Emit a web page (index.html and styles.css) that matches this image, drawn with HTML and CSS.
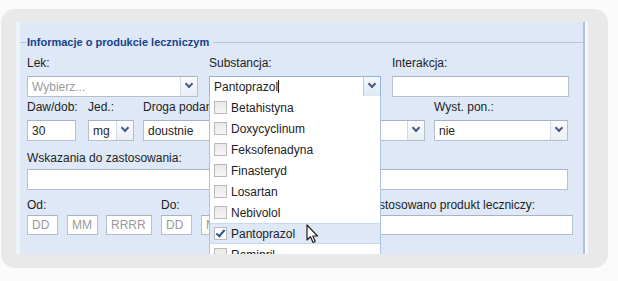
FILE: index.html
```html
<!DOCTYPE html>
<html lang="pl">
<head>
    <meta charset="UTF-8">
    <title>Informacje o produkcie leczniczym</title>
    <link rel="stylesheet" href="styles.css">
</head>
<body>
    <div class="card">
        <div class="screen">
            <div class="legend">
                <span class="legend-line short"></span>
                <span class="legend-text">Informacje o produkcie leczniczym</span>
                <span class="legend-line"></span>
            </div>

            <div class="form">
                <!-- Lek / Substancja / Interakcja -->
                <div class="row row-1">
                    <div class="field f-lek">
                        <label>Lek:</label>
                        <div class="combo">
                            <span class="value placeholder">Wybierz...</span>
                            <span class="trigger"></span>
                        </div>
                    </div>
                    <div class="field f-subst">
                        <label>Substancja:</label>
                        <div class="combo focused">
                            <span class="value">Pantoprazol<span class="caret"></span></span>
                            <span class="trigger"></span>
                        </div>
                    </div>
                    <div class="field f-inter">
                        <label>Interakcja:</label>
                        <div class="input"></div>
                    </div>
                </div>

                <!-- Dawkowanie -->
                <div class="row row-2">
                    <div class="field f-daw">
                        <label>Daw/dob:</label>
                        <div class="input"><span class="value">30</span></div>
                    </div>
                    <div class="field f-jed">
                        <label>Jed.:</label>
                        <div class="combo">
                            <span class="value">mg</span>
                            <span class="trigger"></span>
                        </div>
                    </div>
                    <div class="field f-droga">
                        <label>Droga podania:</label>
                        <div class="combo">
                            <span class="value">doustnie</span>
                            <span class="trigger"></span>
                        </div>
                    </div>
                    <div class="field f-wyst">
                        <label>Wyst. pon.:</label>
                        <div class="combo">
                            <span class="value">nie</span>
                            <span class="trigger"></span>
                        </div>
                    </div>
                </div>

                <div class="row row-3">
                    <div class="field f-full">
                        <label>Wskazania do zastosowania:</label>
                        <div class="input"></div>
                    </div>
                </div>

                <!-- Okres stosowania -->
                <div class="row row-4">
                    <div class="field">
                        <label>Od:</label>
                        <div class="date">
                            <div class="input d2"><span class="value placeholder">DD</span></div>
                            <div class="input d2"><span class="value placeholder">MM</span></div>
                            <div class="input d4"><span class="value placeholder">RRRR</span></div>
                        </div>
                    </div>
                    <div class="field">
                        <label>Do:</label>
                        <div class="date">
                            <div class="input d2"><span class="value placeholder">DD</span></div>
                            <div class="input d2"><span class="value placeholder">MM</span></div>
                            <div class="input d4"><span class="value placeholder">RRRR</span></div>
                        </div>
                    </div>
                    <div class="field f-cel">
                        <label>W jakim celu zastosowano produkt leczniczy:</label>
                        <div class="input"></div>
                    </div>
                </div>
            </div>

            <!-- Lista substancji (rozwinięta) -->
            <ul class="dropdown">
                <li><span class="check"></span>Betahistyna</li>
                <li><span class="check"></span>Doxycyclinum</li>
                <li><span class="check"></span>Feksofenadyna</li>
                <li><span class="check"></span>Finasteryd</li>
                <li><span class="check"></span>Losartan</li>
                <li><span class="check"></span>Nebivolol</li>
                <li class="selected"><span class="check checked"></span>Pantoprazol</li>
                <li><span class="check"></span>Ramipril</li>
            </ul>

            <svg class="cursor" width="13" height="20" viewBox="0 0 13 20">
                <path d="M1 1 L1 16 L4.5 12.8 L7 18.5 L9.2 17.5 L6.8 12 L11.5 12 Z" fill="#fff" stroke="#222" stroke-width="1.2" stroke-linejoin="round"/>
            </svg>
        </div>
    </div>
</body>
</html>
```

FILE: styles.css
```css
* {
    margin: 0;
    padding: 0;
    box-sizing: border-box;
}

body {
    background: #fbfbfb;
    font-family: "Liberation Sans", Arial, sans-serif;
    font-size: 12px;
    color: #1e1e1e;
    width: 618px;
    height: 281px;
    overflow: hidden;
}

.card {
    margin: 9px 10px 0 1px;
    height: 259px;
    background: #e9e9e9;
    border-radius: 14px;
    padding: 13px 20px 14px 15px;
}

.screen {
    position: relative;
    height: 232px;
    overflow: hidden;
    background: #dfe8f6;
    border-left: 4px solid #eef2f9;
    box-shadow: inset -3px 0 0 #f6f8fb, inset -5px 0 0 #b3c0da;
}

.legend {
    display: flex;
    align-items: center;
    height: 14px;
    margin-top: 13px;
    padding-right: 5px;
}

.legend-line {
    flex: 1;
    height: 1px;
    background: #b6c5df;
}

.legend-line.short {
    flex: none;
    width: 6px;
}

.legend-text {
    color: #15428b;
    font-weight: bold;
    font-size: 11px;
    padding: 0 4px 0 1px;
}

.form {
    padding: 0 15px 0 7px;
}

.row {
    display: flex;
}

.row-1 { margin-top: 7px; gap: 11px; }
.row-2 { margin-top: 3px; gap: 9px; }
.row-3 { margin-top: 10px; }
.row-4 { margin-top: 8px; gap: 9px; }

.row-2 .f-jed { margin-left: 3px; }

.field label {
    display: block;
    height: 14px;
    line-height: 14px;
    margin-bottom: 6px;
    white-space: nowrap;
}

.row-3 label { margin-bottom: 4px; }
.row-4 label { margin-bottom: 3px; }

.f-lek { width: 171px; }
.f-subst { width: 172px; }
.f-inter { width: 177px; }
.f-daw { width: 49px; }
.f-jed { width: 46px; }
.f-droga { width: 282px; }
.f-wyst { width: 134px; }
.f-full { width: 541px; }
.f-cel { flex: 1; }

.input,
.combo {
    display: flex;
    align-items: center;
    height: 21px;
    background: #fff;
    border: 1px solid #b7bfcc;
    border-top-color: #a9b2c2;
}

.row-4 .input { height: 20px; }

.value {
    flex: 1;
    padding-left: 4px;
    white-space: nowrap;
    overflow: hidden;
}

.placeholder {
    color: #9a9a9a;
}

.caret {
    display: inline-block;
    width: 1px;
    height: 13px;
    background: #222;
    vertical-align: -2px;
}

.trigger {
    position: relative;
    width: 17px;
    height: 100%;
    background: linear-gradient(#fbfcfe, #e9eef6);
    border-left: 1px solid #d4dae4;
}

.trigger::after {
    content: "";
    position: absolute;
    left: 5px;
    top: 4px;
    width: 4px;
    height: 4px;
    border-right: 2px solid #4a5d7e;
    border-bottom: 2px solid #4a5d7e;
    transform: rotate(45deg);
}

.combo.focused {
    border-color: #8fb4de;
}

.combo.focused .trigger {
    background: linear-gradient(#f4f8fd, #dde8f6);
    border-left-color: #b8cde9;
}

.date {
    display: flex;
    gap: 9px;
}

.date .d2 { width: 31px; }
.date .d4 { width: 46px; margin-left: -1px; }

.dropdown {
    position: absolute;
    left: 189px;
    top: 74px;
    width: 172px;
    height: 200px;
    list-style: none;
    background: #fff;
    border: 1px solid #a8c2e6;
    border-top: none;
    padding-top: 1px;
}

.dropdown li {
    display: flex;
    align-items: center;
    height: 21px;
    padding-left: 4px;
    color: #222;
}

.dropdown li.selected {
    background: #dfe8f6;
    border-top: 1px solid #c9d8ee;
    border-bottom: 1px solid #c9d8ee;
}

.check {
    position: relative;
    width: 13px;
    height: 13px;
    margin-right: 4px;
    border: 1px solid #b9b9b9;
    background: linear-gradient(#e9e9e9, #f6f6f6);
}

.check.checked {
    background: #fff;
}

.check.checked::after {
    content: "";
    position: absolute;
    left: 3px;
    top: 0;
    width: 3px;
    height: 7px;
    border-right: 2px solid #2a4f94;
    border-bottom: 2px solid #2a4f94;
    transform: rotate(40deg);
}

.cursor {
    position: absolute;
    left: 286px;
    top: 202px;
}
```
